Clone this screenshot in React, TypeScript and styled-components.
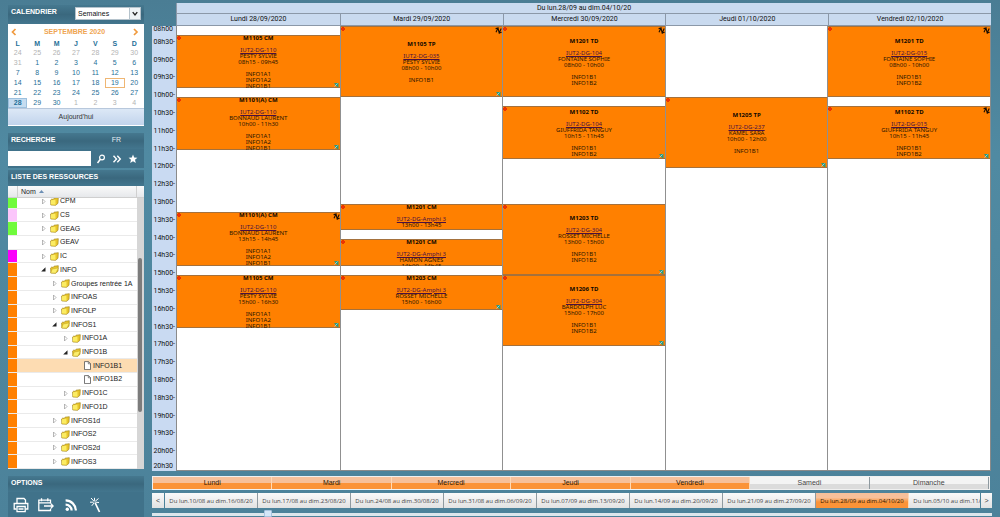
import React from "react";
import styled, { createGlobalStyle, css } from "styled-components";

const UI = `"Liberation Sans", Arial, sans-serif`;
const PLAN = `"Noto Sans", "Open Sans", sans-serif`;

const GlobalStyle = createGlobalStyle`
  *, *::before, *::after { box-sizing: border-box; }
  body { margin: 0; background: #4d829a; font-family: ${UI}; font-size: 7px; line-height: 10px; color: #222; }
  button, input, select { font: inherit; margin: 0; border-radius: 0; }
  ul { list-style: none; margin: 0; padding: 0; }
  a { color: inherit; }
`;

const Page = styled.div`
  display: flex;
  height: 100vh;
  min-height: 517px;
  overflow: hidden;
  background: linear-gradient(#4a7d94, #508aa2 30%, #4c829a);
`;

/* ---------- side bar ---------- */

const Sidebar = styled.aside`
  flex: none;
  width: 144px;
  padding: 5px 0 0 8px;
  display: flex;
  flex-direction: column;
  gap: 7px;
`;

const Panel = styled.section`
  display: flex;
  flex-direction: column;
  background: #40728a;
`;

const TreePanel = styled(Panel)`
  flex: 1;
  min-height: 0;
  margin-top: -5px;
`;

const PanelHead = styled.header<{ $tall?: boolean }>`
  display: flex;
  align-items: ${(p) => (p.$tall ? "flex-start" : "center")};
  justify-content: space-between;
  height: ${(p) => (p.$tall ? 19 : 16)}px;
  padding: ${(p) => (p.$tall ? "2px 3px" : "0 3px 2px")};
  background: linear-gradient(#45788f, #3a687e 50%, #43768e);
`;

const PanelTitle = styled.h2`
  margin: 0;
  font-size: 7px;
  line-height: 10px;
  font-weight: bold;
  color: #fff;
`;

const Language = styled.a`
  margin-right: 20px;
  color: #e4eef3;
  text-decoration: none;
`;

const SelectBox = styled.label`
  display: flex;
  width: 66px;
  height: 13px;
  background: #fff;
  border: 1px solid #b5c3cc;
`;

const Select = styled.select`
  flex: 1;
  min-width: 0;
  padding: 0 2px;
  border: 0;
  background: transparent;
  appearance: none;
  color: #111;
`;

const SelectArrow = styled.svg`
  width: 11px;
  height: 11px;
  border-left: 1px solid #b5c3cc;
  background: #eef3f6;
`;

const Calendar = styled.div`
  background: #fff;
  border-bottom: 1px solid #fff;
`;

const MonthBar = styled.div`
  display: flex;
  align-items: center;
  justify-content: space-between;
  height: 16px;
  padding: 0 5px 0 2px;
  color: #efa552;
  font-weight: bold;
`;

const MonthButton = styled.button`
  width: 8px;
  height: 10px;
  padding: 0;
  border: 0;
  background: none;
  color: #f09a3e;
  svg { display: block; width: 8px; height: 10px; }
`;

const MonthTable = styled.table`
  width: 100%;
  border-collapse: collapse;
  table-layout: fixed;
  color: #1f7098;
  th, td { padding: 0; height: 10px; line-height: 8px; text-align: center; }
  th { height: 8px; }
`;

const Day = styled.td<{ $kind?: string }>`
  ${(p) => p.$kind === "out" && css`color: #b3b3b3;`}
  ${(p) => p.$kind === "today" && css`box-shadow: inset 0 0 0 1px #efb673;`}
  ${(p) => p.$kind === "picked" && css`
    background: #c5dcf0; font-weight: bold; box-shadow: inset 0 0 0 1px #9cc0de;
  `}
`;

const TodayButton = styled.button`
  display: block;
  width: 100%;
  height: 17px;
  padding: 0;
  border: 0;
  border-top: 1px solid #b8c8dc;
  background: linear-gradient(#dce8f6, #c2d4ec);
  color: #333;
`;

const SearchRow = styled.form`
  display: flex;
  align-items: center;
  height: 19px;
  padding-right: 3px;
`;

const SearchInput = styled.input`
  width: 83px;
  height: 15px;
  margin-right: 2px;
  border: 0;
  background: #fff;
`;

const IconButton = styled.button`
  flex: 1;
  display: flex;
  justify-content: center;
  padding: 0;
  border: 0;
  background: none;
  color: #fff;
  svg { width: 10px; height: 10px; }
`;

const TreeHead = styled.div`
  display: flex;
  align-items: center;
  height: 12px;
  background: linear-gradient(#fafafa, #e6e8eb);
  border-bottom: 1px solid #cfcfcf;
  &::before { content: ""; width: 10px; height: 11px; border-right: 1px solid #d0d0d0; }
  &::after { content: ""; width: 8px; height: 11px; border-left: 1px solid #d0d0d0; }
`;

const TreeColumn = styled.button`
  flex: 1;
  display: flex;
  align-items: center;
  gap: 3px;
  padding: 0 3px;
  border: 0;
  background: none;
  color: #222;
  svg { width: 5px; height: 3px; }
`;

const TreeView = styled.div`
  flex: 1;
  min-height: 0;
  display: flex;
  background: #fff;
`;

const TreeClip = styled.div`
  flex: 1;
  display: flex;
  flex-direction: column;
  justify-content: flex-end;
  overflow: hidden;
`;

const TreeRows = styled.ul`
  flex: none;
  display: grid;
  grid-template-rows: repeat(20, minmax(0, 1fr));
  height: calc(100% + 3px);
`;

const TreeRow = styled.li<{ $depth: number; $picked?: boolean }>`
  display: flex;
  align-items: center;
  border-bottom: 1px solid #eaeaea;
  white-space: nowrap;
  color: #222;
  background: ${(p) => (p.$picked ? "#fddcb2" : "#fff")};
  & > svg:first-of-type { margin-left: ${(p) => 23 + p.$depth * 11}px; }
`;

const Swatch = styled.span<{ $color: string }>`
  flex: none;
  width: 9px;
  height: 100%;
  background: ${(p) => p.$color};
`;

const Twist = styled.svg`
  flex: none;
  width: 7px;
  height: 7px;
  margin-right: 3px;
`;

const NodeIcon = styled.svg`
  flex: none;
  width: 9px;
  height: 9px;
  margin-right: 1px;
`;

const ScrollTrack = styled.div`
  flex: none;
  width: 7px;
  display: grid;
  grid-template-rows: 60fr 154fr 57fr;
  padding: 0 2px 0 1px;
  background: #d6d6d6;
`;

const ScrollThumb = styled.div`
  grid-row: 2;
  border-radius: 2px;
  background: #7c7c7c;
`;

const Tools = styled.div`
  display: flex;
  align-items: center;
  gap: 9px;
  height: 25px;
  padding: 1px 5px 0;
`;

const Tool = styled.button`
  display: block;
  padding: 0;
  border: 0;
  background: none;
  color: #fff;
  svg { display: block; width: 16px; height: 16px; }
`;

/* ---------- planning ---------- */

const Main = styled.main`
  flex: 1;
  min-width: 0;
  display: flex;
  flex-direction: column;
  padding: 3px 8px 0;
`;

const Planning = styled.div`
  flex: 1;
  min-height: 0;
  margin-right: 1px;
  display: grid;
  grid-template: 23px minmax(0, 1fr) / 24px minmax(0, 1fr);
  font-family: Roboto, ${PLAN};
`;

const PlanHead = styled.div`
  grid-column: 2;
  display: grid;
  grid-template-rows: 11px 12px;
  background: #c9daef;
  border-left: 1px solid #8b98a8;
  text-align: center;
  font-size: 7px;
  line-height: 10px;
  color: #111;
`;

const WeekTitle = styled.div`
  border-bottom: 1px solid #8b98a8;
`;

const DayTitles = styled.div`
  display: grid;
  grid-template-columns: repeat(5, 1fr);
  border-bottom: 1px solid #8b98a8;
  & > * + * { border-left: 1px solid #8b98a8; }
`;

const Hours = styled.div`
  min-height: 0;
  display: grid;
  grid-template-rows: repeat(50, minmax(0, 1fr));
  background: #c9daf2;
  font-size: 7px;
  line-height: 7px;
  color: #111;
`;

const Hour = styled.span<{ $slot: number }>`
  display: flex;
  justify-content: flex-end;
  align-items: center;
  padding: 0 1px 3px 0;
  grid-row: ${(p) => p.$slot} / span 2;
  ${(p) => p.$slot === 0 && css`grid-row: 1; padding: 0 3px 2px 0;`}
  ${(p) => p.$slot === 50 && css`grid-row: 50; padding: 0 3px 0 0;`}
`;

const Days = styled.div`
  min-height: 0;
  display: grid;
  grid-template-columns: repeat(5, minmax(0, 1fr));
  grid-template-rows: minmax(0, 1fr);
  background: #fff;
  border: 1px solid #8a8a8a;
  border-width: 0 1px 1px 1px;
  & > * + * { border-left: 1px solid #909090; }
`;

const DayColumn = styled.div`
  min-height: 0;
  display: grid;
  grid-template-rows: repeat(50, minmax(0, 1fr));
`;

const Event = styled.article<{ $start: number; $span: number; $top?: boolean }>`
  grid-row: ${(p) => p.$start + 1} / span ${(p) => p.$span};
  position: relative;
  display: flex;
  flex-direction: column;
  justify-content: ${(p) => (p.$top ? "flex-start" : "safe center")};
  min-height: 0;
  overflow: hidden;
  background: #ff8000;
  box-shadow: inset 0 1px #a5713c, inset 0 -1px #a5713c;
  text-align: center;
  font-family: ${PLAN};
  font-size: 6px;
  line-height: 6px;
  color: #2a1500;
`;

const EventTitle = styled.h3`
  flex: none;
  margin: 0 0 6px;
  font-size: 6px;
  line-height: 6px;
  color: #100800;
`;

const Room = styled.a`
  color: #4a1040;
`;

const Line = styled.div`
  flex: none;
`;

const Groups = styled.div`
  flex: none;
  margin-top: 6px;
`;

const Corner = styled.svg<{ $at: "tl" | "tr" | "br" }>`
  position: absolute;
  ${(p) => p.$at === "tl" && css`left: 0; top: 1px; width: 4px; height: 4px;`}
  ${(p) => p.$at === "tr" && css`right: 0; top: 1px; width: 7px; height: 7px;`}
  ${(p) => p.$at === "br" && css`right: 1px; bottom: 1px; width: 5px; height: 5px;`}
`;

/* ---------- bottom bars ---------- */

const DayBar = styled.div`
  display: grid;
  grid-template-columns: repeat(7, 1fr);
  margin: 5px 2px 3px 0;
  border: 1px solid #f0f0f0;
  height: 14px;
`;

const BarButton = styled.button<{ $on?: boolean }>`
  min-width: 0;
  padding: 0;
  overflow: hidden;
  white-space: nowrap;
  border: 0;
  border-right: 1px solid #8f9aa0;
  background: ${(p) =>
    p.$on
      ? "linear-gradient(#f7c09a 0 50%, #fb9338 50% 100%)"
      : "linear-gradient(#f4f4f4 0 60%, #dcdcdc 60% 100%)"};
  color: ${(p) => (p.$on ? "#2a1500" : "#444")};
  ${(p) => p.$on && css`border-right-color: #ffd9b5;`}
`;

const WeekBar = styled.div`
  display: grid;
  grid-template-columns: 12px minmax(0, 1fr) 11px;
  gap: 1px;
  height: 15px;
`;

const WeekClip = styled.div`
  display: flex;
  overflow: hidden;
`;

const WeekButton = styled(BarButton)`
  flex: none;
  width: 93px;
  font-family: "Open Sans", sans-serif;
  font-size: 6px;
  background: ${(p) =>
    p.$on
      ? "linear-gradient(#f7c09a 0 30%, #fb9338 60% 100%)"
      : "linear-gradient(#fafafa, #e2e2e2)"};
`;

const StepButton = styled(BarButton)`
  border-right: 0;
  background: linear-gradient(#fafafa, #e2e2e2);
`;

const Slider = styled.input`
  display: block;
  width: 100%;
  height: 7px;
  margin-top: 2px;
  appearance: none;
  background: linear-gradient(transparent 0 3px, #dce6ec 3px 6px, transparent 6px);
  &::-webkit-slider-thumb {
    appearance: none;
    width: 8px;
    height: 7px;
    border: 1px solid #a8c4e0;
    border-radius: 1px;
    background: #d4e6f8;
  }
`;

/* ---------- data ---------- */

const weeks = [
  [24, 25, 26, 27, 28, 29, 30],
  [31, 1, 2, 3, 4, 5, 6],
  [7, 8, 9, 10, 11, 12, 13],
  [14, 15, 16, 17, 18, 19, 20],
  [21, 22, 23, 24, 25, 26, 27],
  [28, 29, 30, 1, 2, 3, 4],
];

const dayKind = (week: number, day: number) => {
  if (week === 0 || (week === 1 && day === 31) || (week === 5 && day < 5)) return "out";
  if (week === 3 && day === 19) return "today";
  if (week === 5 && day === 28) return "picked";
  return undefined;
};

const ORANGE = "#ff8000";
type Node = [label: string, depth: number, state: "closed" | "open" | "leaf", color: string];
const nodes: Node[] = [
  ["CPM", 0, "closed", "#70fb3c"],
  ["CS", 0, "closed", "#fbc6fb"],
  ["GEAG", 0, "closed", "#70fb3c"],
  ["GEAV", 0, "closed", "#ffffff"],
  ["IC", 0, "closed", "#fb00fb"],
  ["INFO", 0, "open", ORANGE],
  ["Groupes rentrée 1A", 1, "closed", ORANGE],
  ["INFOAS", 1, "closed", ORANGE],
  ["INFOLP", 1, "closed", ORANGE],
  ["INFOS1", 1, "open", ORANGE],
  ["INFO1A", 2, "closed", ORANGE],
  ["INFO1B", 2, "open", ORANGE],
  ["INFO1B1", 3, "leaf", ORANGE],
  ["INFO1B2", 3, "leaf", ORANGE],
  ["INFO1C", 2, "closed", ORANGE],
  ["INFO1D", 2, "closed", ORANGE],
  ["INFOS1d", 1, "closed", ORANGE],
  ["INFOS2", 1, "closed", ORANGE],
  ["INFOS2d", 1, "closed", ORANGE],
  ["INFOS3", 1, "closed", ORANGE],
];

/* start and span are counted in quarters of an hour from 08h00 */
type Course = {
  start: number; span: number; title: string; room: string; who?: string; time: string;
  groups?: string[]; note?: boolean; link?: boolean; top?: boolean;
};
const G3 = ["INFO1A1", "INFO1A2", "INFO1B1"];
const G2 = ["INFO1B1", "INFO1B2"];
const days: { name: string; courses: Course[] }[] = [
  {
    name: "Lundi 28/09/2020",
    courses: [
      { start: 1, span: 6, title: "M1105 CM", room: "IUT2-DG-110", who: "PESTY SYLVIE", time: "08h15 - 09h45", groups: G3, link: true },
      { start: 8, span: 6, title: "M1101(A) CM", room: "IUT2-DG-110", who: "BONNAUD LAURENT", time: "10h00 - 11h30", groups: G3, link: true },
      { start: 21, span: 6, title: "M1101(A) CM", room: "IUT2-DG-110", who: "BONNAUD LAURENT", time: "13h15 - 14h45", groups: G3, note: true, link: true },
      { start: 28, span: 6, title: "M1105 CM", room: "IUT2-DG-110", who: "PESTY SYLVIE", time: "15h00 - 16h30", groups: G3, link: true },
    ],
  },
  {
    name: "Mardi 29/09/2020",
    courses: [
      { start: 0, span: 8, title: "M1105 TP", room: "IUT2-DG-035", who: "PESTY SYLVIE", time: "08h00 - 10h00", groups: ["INFO1B1"], note: true, link: true },
      { start: 20, span: 3, title: "M1201 CM", room: "IUT2-DG-Amphi 3", time: "13h00 - 13h45", top: true },
      { start: 24, span: 3, title: "M1201 CM", room: "IUT2-DG-Amphi 3", who: "HAMON AGNES", time: "14h00 - 14h45", top: true },
      { start: 28, span: 4, title: "M1203 CM", room: "IUT2-DG-Amphi 3", who: "ROSSET MICHELLE", time: "15h00 - 16h00", top: true, link: true },
    ],
  },
  {
    name: "Mercredi 30/09/2020",
    courses: [
      { start: 0, span: 8, title: "M1201 TD", room: "IUT2-DG-104", who: "FONTAINE SOPHIE", time: "08h00 - 10h00", groups: G2, note: true },
      { start: 9, span: 6, title: "M1102 TD", room: "IUT2-DG-104", who: "GIUFFRIDA TANGUY", time: "10h15 - 11h45", groups: G2, link: true },
      { start: 20, span: 8, title: "M1203 TD", room: "IUT2-DG-304", who: "ROSSET MICHELLE", time: "13h00 - 15h00", groups: G2, link: true },
      { start: 28, span: 8, title: "M1206 TD", room: "IUT2-DG-304", who: "BARDOLPH LUC", time: "15h00 - 17h00", groups: G2, link: true },
    ],
  },
  {
    name: "Jeudi 01/10/2020",
    courses: [
      { start: 8, span: 8, title: "M1205 TP", room: "IUT2-DG-237", who: "KAMEL SARA", time: "10h00 - 12h00", groups: ["INFO1B1"], link: true },
    ],
  },
  {
    name: "Vendredi 02/10/2020",
    courses: [
      { start: 0, span: 8, title: "M1201 TD", room: "IUT2-DG-015", who: "FONTAINE SOPHIE", time: "08h00 - 10h00", groups: G2, note: true },
      { start: 9, span: 6, title: "M1102 TD", room: "IUT2-DG-015", who: "GIUFFRIDA TANGUY", time: "10h15 - 11h45", groups: G2, note: true, link: true },
    ],
  },
];

const weekRanges = [
  "10/08 au dim.16/08/20", "17/08 au dim.23/08/20", "24/08 au dim.30/08/20",
  "31/08 au dim.06/09/20", "07/09 au dim.13/09/20", "14/09 au dim.20/09/20",
  "21/09 au dim.27/09/20", "28/09 au dim.04/10/20", "05/10 au dim.11/10/20",
];

const hours = Array.from({ length: 26 }, (_, i) => {
  const h = String(8 + Math.floor(i / 2)).padStart(2, "0");
  const edge = i === 0 || i === 25;
  return { slot: i * 2, text: `${h}h${i % 2 ? "30" : "00"}${edge ? "" : "-"}` };
});

/* ---------- drawings ---------- */

const Chevron = ({ flip }: { flip?: boolean }) => (
  <svg viewBox="0 0 8 10" fill="none" stroke="currentColor" strokeWidth="1.7">
    <path d={flip ? "M3 2l3 3-3 3" : "M5.5 2l-3 3 3 3"} />
  </svg>
);

const TwistIcon = ({ state }: { state: Node[2] }) => (
  <Twist viewBox="0 0 7 7">
    {state === "closed" && <path d="M2.5 1v5L5 3.5z" fill="#fff" stroke="#999" strokeWidth=".7" />}
    {state === "open" && <path d="M5.5 1.2v4.3H1.2z" fill="#222" />}
  </Twist>
);

const FolderIcon = ({ state }: { state: Node[2] }) =>
  state === "leaf" ? (
    <NodeIcon viewBox="0 0 9 9">
      <path d="M1.5.6h4l2 2v6h-6z" fill="#fff" stroke="#555" strokeWidth=".8" />
      <path d="M5.3.6v2.2h2.2" fill="none" stroke="#555" strokeWidth=".7" />
    </NodeIcon>
  ) : (
    <NodeIcon viewBox="0 0 9 9">
      <path d="M.6 3l1.2-1 1.4.5L4 1.2 8.3.7 8 6.3 5.6 8.3.8 8z" fill="#e8c52c" stroke="#9a7d10" strokeWidth=".6" />
      {state === "open" ? (
        <path d="M.8 8l1.4-4 6.2-1-2.6 5.2z" fill="#fbee6c" stroke="#b6981c" strokeWidth=".4" />
      ) : (
        <path d="M1 3.2l4.4-.4.2 5L1 7.6z" fill="#fbec62" />
      )}
    </NodeIcon>
  );

const App = () => (
  <>
    <GlobalStyle />
    <Page>
      <Sidebar>
        <Panel>
          <PanelHead $tall>
            <PanelTitle>CALENDRIER</PanelTitle>
            <SelectBox>
              <Select aria-label="Affichage" defaultValue="Semaines">
                <option>Semaines</option>
              </Select>
              <SelectArrow viewBox="0 0 11 11">
                <path d="M3 4l2.5 3L8 4" fill="none" stroke="#222" strokeWidth="1.5" />
              </SelectArrow>
            </SelectBox>
          </PanelHead>
          <Calendar>
            <MonthBar>
              <MonthButton aria-label="Mois précédent"><Chevron /></MonthButton>
              SEPTEMBRE 2020
              <MonthButton aria-label="Mois suivant"><Chevron flip /></MonthButton>
            </MonthBar>
            <MonthTable>
              <thead>
                <tr>{["L", "M", "M", "J", "V", "S", "D"].map((d, i) => <th key={i}>{d}</th>)}</tr>
              </thead>
              <tbody>
                {weeks.map((week, w) => (
                  <tr key={w}>
                    {week.map((d) => <Day key={d} $kind={dayKind(w, d)}>{d}</Day>)}
                  </tr>
                ))}
              </tbody>
            </MonthTable>
            <TodayButton>Aujourd'hui</TodayButton>
          </Calendar>
        </Panel>

        <Panel>
          <PanelHead>
            <PanelTitle>RECHERCHE</PanelTitle>
            <Language href="#fr">FR</Language>
          </PanelHead>
          <SearchRow onSubmit={(e) => e.preventDefault()}>
            <SearchInput aria-label="Recherche" />
            <IconButton aria-label="Rechercher">
              <svg viewBox="0 0 10 10" fill="none" stroke="currentColor" strokeWidth="1.2">
                <circle cx="6" cy="3.5" r="2.4" /><path d="M4.4 5.2L1.5 9" strokeWidth="1.5" />
              </svg>
            </IconButton>
            <IconButton aria-label="Suivant">
              <svg viewBox="0 0 10 10" fill="none" stroke="currentColor" strokeWidth="1.4">
                <path d="M1.5 1.8L4.5 5l-3 3.2M5.3 1.8L8.3 5l-3 3.2" />
              </svg>
            </IconButton>
            <IconButton aria-label="Favoris">
              <svg viewBox="0 0 10 10" fill="currentColor">
                <path d="M5 .6l1.2 3 3.2.2-2.4 2 .8 3.2L5 7.3 2.2 9 3 5.8.6 3.8l3.2-.2z" />
              </svg>
            </IconButton>
          </SearchRow>
        </Panel>

        <TreePanel>
          <PanelHead><PanelTitle>LISTE DES RESSOURCES</PanelTitle></PanelHead>
          <TreeHead>
            <TreeColumn>
              Nom
              <svg viewBox="0 0 5 3"><path d="M0 3L2.5 0 5 3z" fill="#6c8fb5" /></svg>
            </TreeColumn>
          </TreeHead>
          <TreeView>
            <TreeClip>
              <TreeRows>
                {nodes.map(([label, depth, state, color]) => (
                  <TreeRow key={label} $depth={depth} $picked={label === "INFO1B1"}>
                    <Swatch $color={color} />
                    <TwistIcon state={state} />
                    <FolderIcon state={state} />
                    {label}
                  </TreeRow>
                ))}
              </TreeRows>
            </TreeClip>
            <ScrollTrack><ScrollThumb /></ScrollTrack>
          </TreeView>
        </TreePanel>

        <Panel>
          <PanelHead><PanelTitle>OPTIONS</PanelTitle></PanelHead>
          <Tools>
            <Tool aria-label="Imprimer">
              <svg viewBox="0 0 16 16" fill="none" stroke="currentColor" strokeWidth="1.3">
                <path d="M4 6V1.5h7l1.5 1.5v3M3.5 12H1.2V6.5h13.6V12h-2.3" />
                <path d="M4 9.5h8.2v5.2H4zM5.5 12h5" />
              </svg>
            </Tool>
            <Tool aria-label="Exporter">
              <svg viewBox="0 0 16 16" fill="none" stroke="currentColor" strokeWidth="1.3">
                <path d="M12.5 6V3.2H.8v10.3h11.7v-1.6M.8 5.8h11.7M3.5 1.2v3M9.8 1.2v3M6 9h9M12.6 6.4L15.2 9l-2.6 2.6" />
              </svg>
            </Tool>
            <Tool aria-label="Flux RSS">
              <svg viewBox="0 0 16 16" fill="none" stroke="currentColor" strokeWidth="2.2">
                <circle cx="4.3" cy="12.3" r="1.7" fill="currentColor" stroke="none" />
                <path d="M2.6 7.6a6 6 0 0 1 6 6M2.6 3.4a10.2 10.2 0 0 1 10.2 10.2" />
              </svg>
            </Tool>
            <Tool aria-label="Assistant">
              <svg viewBox="0 0 16 16" fill="none" stroke="currentColor" strokeWidth="1">
                <path d="M7 5.5l4.5 9.5" strokeWidth="1.7" />
                <path d="M6.3 4.5L3 1M6.5 3.8V.8M7.2 4.3L10.5 1.5M5.7 5.2H2M7.8 5.2l3.2.3M6 6l-2.2 2.8" />
              </svg>
            </Tool>
          </Tools>
        </Panel>
      </Sidebar>

      <Main>
        <Planning>
          <PlanHead>
            <WeekTitle>Du lun.28/09 au dim.04/10/20</WeekTitle>
            <DayTitles>{days.map((d) => <div key={d.name}>{d.name}</div>)}</DayTitles>
          </PlanHead>
          <Hours>
            {hours.map((h) => <Hour key={h.slot} $slot={h.slot}>{h.text}</Hour>)}
          </Hours>
          <Days>
            {days.map((d) => (
              <DayColumn key={d.name}>
                {d.courses.map((c) => (
                  <Event key={c.start} $start={c.start} $span={c.span} $top={c.top}>
                    <EventTitle>{c.title}</EventTitle>
                    <Line><Room href="#salle">{c.room}</Room></Line>
                    {c.who && <Line>{c.who}</Line>}
                    <Line>{c.time}</Line>
                    {c.groups && <Groups>{c.groups.map((g) => <Line key={g}>{g}</Line>)}</Groups>}
                    <Corner $at="tl" viewBox="0 0 4 4">
                      <circle cx="2" cy="2" r="1.3" fill="none" stroke="#e00000" strokeWidth="1" />
                    </Corner>
                    {c.note && (
                      <Corner $at="tr" viewBox="0 0 7 7">
                        <path d="M1 5.2L3 1l1.2 5L6.2 1.6M.6 1.6L3 1M4.2 6l2.4-.8" fill="none" stroke="#1a0d00" strokeWidth="1.1" />
                      </Corner>
                    )}
                    {c.link && (
                      <Corner $at="br" viewBox="0 0 5 5">
                        <path d="M0 1h4.5v4H3z" fill="#2f9a78" />
                        <path d="M.5 4.5L3.5 1.5" stroke="#8fd0e8" strokeWidth="1" />
                      </Corner>
                    )}
                  </Event>
                ))}
              </DayColumn>
            ))}
          </Days>
        </Planning>
        <DayBar>
          {["Lundi", "Mardi", "Mercredi", "Jeudi", "Vendredi", "Samedi", "Dimanche"].map((d, i) => (
            <BarButton key={d} $on={i < 5}>{d}</BarButton>
          ))}
        </DayBar>
        <WeekBar>
          <StepButton>&lt;</StepButton>
          <WeekClip>
            {weekRanges.map((r, i) => <WeekButton key={r} $on={i === 7}>Du lun.{r}</WeekButton>)}
          </WeekClip>
          <StepButton>&gt;</StepButton>
        </WeekBar>
        <Slider type="range" aria-label="Semaine" min={0} max={52} defaultValue={7} />
      </Main>
    </Page>
  </>
);

export default App;
